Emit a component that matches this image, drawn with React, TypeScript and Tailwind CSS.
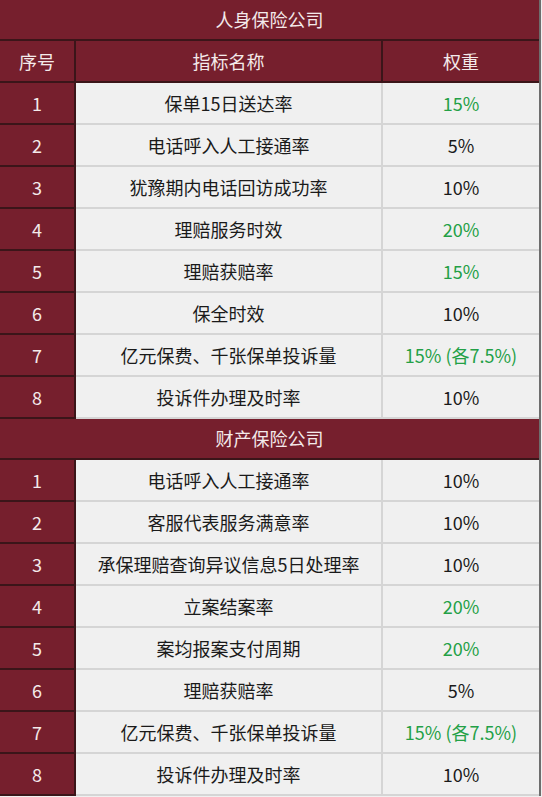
const life = [
  { name: '保单15日送达率', w: '15%', g: true },
  { name: '电话呼入人工接通率', w: '5%', g: false },
  { name: '犹豫期内电话回访成功率', w: '10%', g: false },
  { name: '理赔服务时效', w: '20%', g: true },
  { name: '理赔获赔率', w: '15%', g: true },
  { name: '保全时效', w: '10%', g: false },
  { name: '亿元保费、千张保单投诉量', w: '15% (各7.5%)', g: true },
  { name: '投诉件办理及时率', w: '10%', g: false },
]

const property = [
  { name: '电话呼入人工接通率', w: '10%', g: false },
  { name: '客服代表服务满意率', w: '10%', g: false },
  { name: '承保理赔查询异议信息5日处理率', w: '10%', g: false },
  { name: '立案结案率', w: '20%', g: true },
  { name: '案均报案支付周期', w: '20%', g: true },
  { name: '理赔获赔率', w: '5%', g: false },
  { name: '亿元保费、千张保单投诉量', w: '15% (各7.5%)', g: true },
  { name: '投诉件办理及时率', w: '10%', g: false },
]

type Item = { name: string; w: string; g: boolean }

function Title({ text }: { text: string }) {
  return (
    <div className="h-[41px] flex items-center justify-center bg-[#761f2d] border-b-2 border-[#3b1519] text-[#f4eaea]">
      {text}
    </div>
  )
}

function Rows({ items }: { items: Item[] }) {
  return (
    <>
      {items.map((it, i) => (
        <div key={i} className="grid grid-cols-[76px_307px_156px] h-[42px]">
          <div className="flex items-center justify-center bg-[#761f2d] border-b-2 border-r-2 border-[#3b1519] text-[#f4eaea]">
            {i + 1}
          </div>
          <div className="flex items-center justify-center bg-[#f0f0f0] border-b-2 border-r-2 border-[#d5d5d5] text-[#1a1a1a]">
            {it.name}
          </div>
          <div
            className={
              'flex items-center justify-center bg-[#f0f0f0] border-b-2 border-[#d5d5d5] ' +
              (it.g ? 'text-[#23a046]' : 'text-[#1a1a1a]')
            }
          >
            {it.w}
          </div>
        </div>
      ))}
    </>
  )
}

export default function App() {
  return (
    <div className="w-[542px] h-[797px] overflow-hidden bg-[#f0f0f0] font-['Noto_Sans_CJK_SC','Noto_Sans',sans-serif] text-[18px]">
      <div className="w-[541px] border-r-2 border-[#6d6d6d]">
        <Title text="人身保险公司" />
        <div className="grid grid-cols-[76px_307px_156px] h-[42px] bg-[#761f2d] text-[#f4eaea]">
          <div className="flex items-center justify-center border-b-2 border-r-2 border-[#3b1519]">序号</div>
          <div className="flex items-center justify-center border-b-2 border-r-2 border-[#3b1519]">指标名称</div>
          <div className="flex items-center justify-center border-b-2 border-[#3b1519]">权重</div>
        </div>
        <Rows items={life} />
        <Title text="财产保险公司" />
        <Rows items={property} />
      </div>
    </div>
  )
}
